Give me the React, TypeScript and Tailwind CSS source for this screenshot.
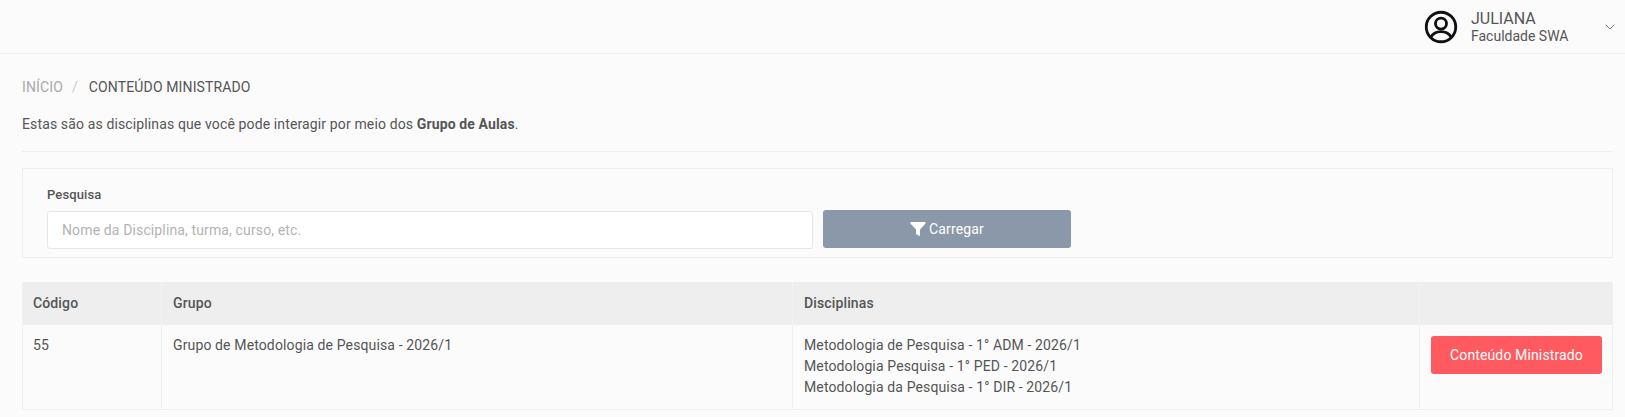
import { ChevronDown } from "lucide-react";

const disciplinas = [
  "Metodologia de Pesquisa - 1° ADM - 2026/1",
  "Metodologia Pesquisa - 1° PED - 2026/1",
  "Metodologia da Pesquisa - 1° DIR - 2026/1",
];

function UserIcon() {
  return (
    <svg viewBox="0 0 24 24" className="w-[34px] h-[34px]" fill="none" stroke="#111" strokeWidth="2">
      <circle cx="12" cy="12" r="10.4" />
      <circle cx="12" cy="9.6" r="3.9" />
      <path d="M4.8 19.2c1.6-2.8 4.2-3.9 7.2-3.9s5.6 1.1 7.2 3.9" />
    </svg>
  );
}

function FilterIcon() {
  return (
    <svg viewBox="0 0 16 16" className="w-[16px] h-[16px]" fill="#fff">
      <path d="M0.5 1h15v1.6L10 8.4V15l-4-1.8V8.4L0.5 2.6z" />
    </svg>
  );
}

export default function App() {
  return (
    <div className="min-h-screen bg-[#fbfbfb] font-['Roboto',sans-serif] text-[14px] tracking-[0.13px] text-[#555]">
      <header className="h-[54px] border-b border-[#f0f0f0] flex items-center justify-end pr-[7px] tracking-normal">
        <UserIcon />
        <div className="ml-[13px] w-[131px] pt-[1px]">
          <div className="text-[16px] leading-[18px] text-[#555]">JULIANA</div>
          <div className="text-[14px] leading-[16px] text-[#555]">Faculdade SWA</div>
        </div>
        <ChevronDown strokeWidth={1.3} className="w-[16px] h-[16px] text-[#666]" />
      </header>

      <main className="pl-[22px] pr-[12px]">
        <nav className="pt-[23px] flex items-center leading-[20px]">
          <span className="text-[#aaa]">INÍCIO</span>
          <span className="text-[#ccc] ml-[9px] mr-[11px]">/</span>
          <span className="text-[#555]">CONTEÚDO MINISTRADO</span>
        </nav>
        <p className="mt-[17px] leading-[20px]">
          Estas são as disciplinas que você pode interagir por meio dos <b className="font-bold">Grupo de Aulas</b>.
        </p>
        <hr className="mt-[17px] border-[#f0f0f0]" />

        <section className="mt-[16px] h-[90px] border border-[#eee] pl-[24px] pt-[16px]">
          <label className="block text-[13px] font-medium leading-[20px] text-[#555]">Pesquisa</label>
          <div className="mt-[5px] flex items-start">
            <input
              placeholder="Nome da Disciplina, turma, curso, etc."
              className="w-[766px] h-[38px] mt-px px-[14px] bg-white border border-[#e6e6e6] rounded-[3px] text-[14px] outline-none placeholder:text-[#b3b3b3]"
            />
            <button className="ml-[10px] w-[248px] h-[38px] rounded-[3px] bg-[#8a98aa] text-white flex items-center justify-center gap-[3px]">
              <FilterIcon />
              Carregar
            </button>
          </div>
        </section>

        <div className="mt-[24px] border border-[#f0f0f0] border-t-0">
          <div className="flex h-[43px] bg-[#eee] font-medium items-center">
            <div className="w-[139px] pl-[10px] h-full flex items-center border-r border-[#f3f3f3]">Código</div>
            <div className="w-[631px] pl-[11px] h-full flex items-center border-r border-[#f3f3f3]">Grupo</div>
            <div className="w-[627px] pl-[11px] h-full flex items-center border-r border-[#f3f3f3]">Disciplinas</div>
            <div className="flex-1" />
          </div>
          <div className="flex h-[84px]">
            <div className="w-[139px] pl-[10px] pt-[10px] border-r border-[#f0f0f0] leading-[20px]">55</div>
            <div className="w-[631px] pl-[11px] pt-[10px] border-r border-[#f0f0f0] leading-[20px]">
              Grupo de Metodologia de Pesquisa - 2026/1
            </div>
            <div className="w-[627px] pl-[11px] pt-[10px] border-r border-[#f0f0f0] leading-[21px]">
              {disciplinas.map((d) => (
                <div key={d}>{d}</div>
              ))}
            </div>
            <div className="flex-1 pl-[11px] pt-[11px]">
              <button className="w-[171px] h-[38px] rounded-[3px] bg-[#ff5a5f] text-white">Conteúdo Ministrado</button>
            </div>
          </div>
        </div>
      </main>
    </div>
  );
}
